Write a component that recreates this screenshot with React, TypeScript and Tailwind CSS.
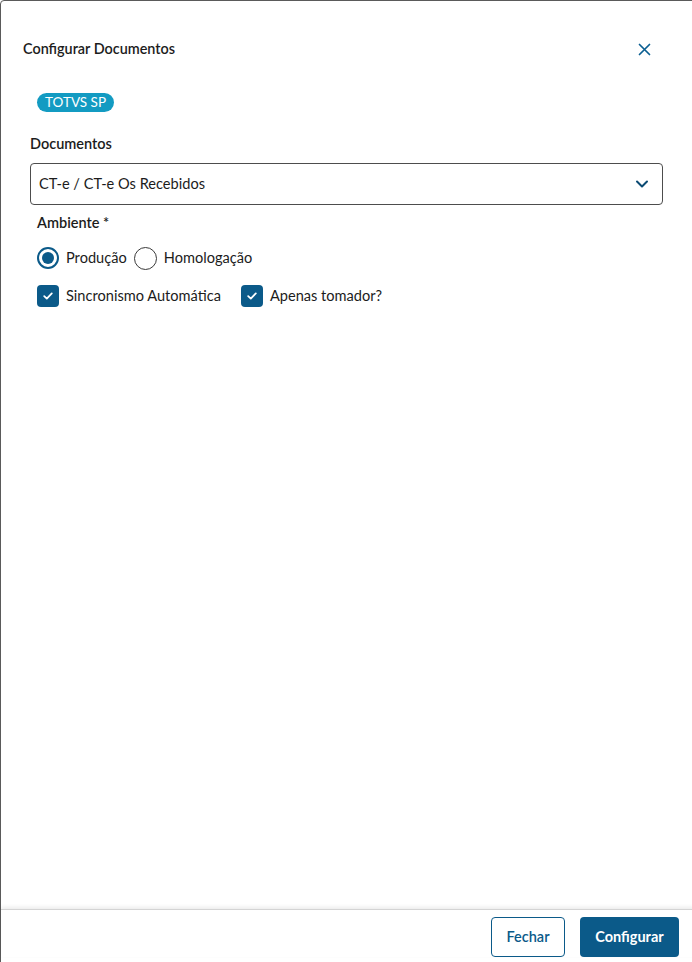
import React from "react";

const font = { fontFamily: "Lato, 'Noto Sans', sans-serif" };

function Check() {
  return (
    <svg width="12" height="12" viewBox="0 0 12 12" fill="none">
      <path d="M2.2 6.2 L4.8 8.6 L9.8 3.4" stroke="white" strokeWidth="1.8" strokeLinecap="round" strokeLinejoin="round" />
    </svg>
  );
}

export default function App() {
  return (
    <div className="w-[692px] h-[962px] overflow-hidden bg-white" style={font}>
      <div className="relative w-[696px] h-[980px] border border-[#5a5a5a] rounded-[4px] bg-white flex flex-col">
        {/* header */}
        <div className="flex items-center justify-between pl-[22px] pr-[44px] pt-[38px]">
          <span className="text-[14.4px] leading-[20px] font-semibold text-[#1c1c1c]">Configurar Documentos</span>
          <svg width="13" height="13" viewBox="0 0 13 13" fill="none">
            <path d="M1.5 1.5 L11.5 11.5 M11.5 1.5 L1.5 11.5" stroke="#0b5f92" strokeWidth="1.7" strokeLinecap="round" />
          </svg>
        </div>
        {/* body */}
        <div className="flex flex-col pl-[29px] pr-[32px]">
          <div className="mt-[30px] pl-[7px]">
            <span className="inline-flex items-center h-[19px] px-[8px] rounded-full bg-[#139bc2] text-white text-[13.5px] leading-[19px]">TOTVS SP</span>
          </div>
          <div className="mt-[21px] text-[14.5px] leading-[20px] font-semibold text-[#1c1c1c]">Documentos</div>
          <div className="mt-[9px] h-[42px] border border-[#4d4d4d] rounded-[4px] flex items-center justify-between pl-[8px] pr-[13px]">
            <span className="text-[14.6px] text-[#1c1c1c]">CT-e / CT-e Os Recebidos</span>
            <svg width="14" height="14" viewBox="0 0 14 14" fill="none">
              <path d="M2 4.5 L7 9.5 L12 4.5" stroke="#0b4a73" strokeWidth="2" strokeLinecap="round" strokeLinejoin="round" />
            </svg>
          </div>
          <div className="mt-[8px] pl-[7px] text-[14.5px] leading-[20px] font-semibold text-[#1c1c1c]">Ambiente *</div>
          <div className="mt-[14px] pl-[7px] flex items-center h-[22px]">
            <span className="w-[22px] h-[22px] rounded-full border-2 border-[#0b5a89] flex items-center justify-center">
              <span className="w-[12px] h-[12px] rounded-full bg-[#0b5a89]" />
            </span>
            <span className="ml-[7px] text-[14.6px] text-[#1c1c1c]">Produção</span>
            <span className="ml-[7px] w-[23px] h-[23px] rounded-full border border-[#3a3a3a]" />
            <span className="ml-[7px] text-[14.6px] text-[#1c1c1c]">Homologação</span>
          </div>
          <div className="mt-[16px] pl-[7px] flex items-center h-[22px]">
            <span className="w-[22px] h-[22px] rounded-[4px] bg-[#0b5a89] flex items-center justify-center">
              <Check />
            </span>
            <span className="ml-[7px] text-[14.6px] text-[#1c1c1c]">Sincronismo Automática</span>
            <span className="ml-[20px] w-[22px] h-[22px] rounded-[4px] bg-[#0b5a89] flex items-center justify-center">
              <Check />
            </span>
            <span className="ml-[7px] text-[14.6px] text-[#1c1c1c]">Apenas tomador?</span>
          </div>
        </div>
        <div className="flex-1" />
        {/* footer */}
        <div className="absolute left-0 right-0 top-[908px] border-t border-[#d4d4d4] shadow-[0_-2px_4px_rgba(0,0,0,0.08)] flex justify-end gap-[15px] pt-[7px] pr-[16px]">
          <button className="h-[40px] w-[74px] border border-[#0b5a89] rounded-[4px] bg-white text-[#0b5a89] text-[14.5px] font-semibold">Fechar</button>
          <button className="h-[40px] w-[99px] rounded-[4px] bg-[#0b5a89] text-white text-[14.5px] font-bold">Configurar</button>
        </div>
      </div>
    </div>
  );
}
